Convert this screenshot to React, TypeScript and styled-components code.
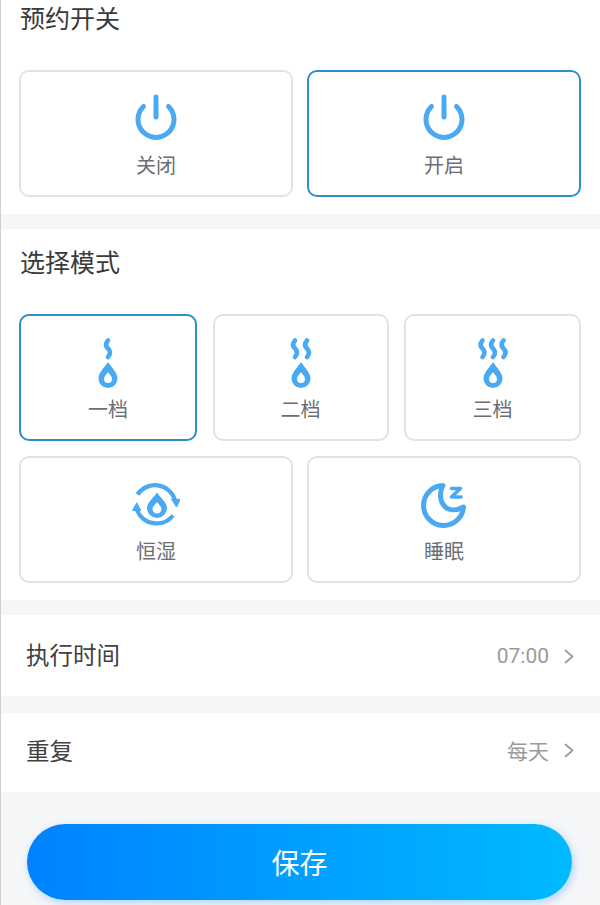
import React from "react";
import styled, { createGlobalStyle } from "styled-components";

const Global = createGlobalStyle`
  html, body { margin: 0; padding: 0; background: #f5f6f8; }
  body { width: 600px; height: 905px; overflow: hidden; font-family: "Noto Sans CJK SC", "Noto Sans", sans-serif; }
  * { box-sizing: border-box; }
`;

const Page = styled.div`
  width: 600px;
  height: 905px;
  overflow: hidden;
  background: #f5f6f8;
  border-left: 1px solid #cfcfcf;
  display: flex;
  flex-direction: column;
`;

const Section = styled.section<{ $first?: boolean }>`
  background: #fff;
  padding: ${(p) => (p.$first ? "0" : "14px")} 19px 17px 18px;
  margin-bottom: 15px;
`;

const Title = styled.h2<{ $first?: boolean }>`
  margin: 0 0 ${(p) => (p.$first ? "32px" : "31px")};
  height: ${(p) => (p.$first ? "38px" : "40px")};
  line-height: ${(p) => (p.$first ? "34px" : "36px")};
  font-size: 25px;
  font-weight: 400;
  color: #3a3a3a;
  padding-left: 1px;
`;

const Grid = styled.div<{ $cols: string }>`
  display: grid;
  grid-template-columns: ${(p) => p.$cols};
  justify-content: space-between;
  & + & { margin-top: 15px; }
`;

const Card = styled.div<{ $active?: boolean }>`
  height: 127px;
  border: 2px solid ${(p) => (p.$active ? "#2b8fc9" : "#e2e2e2")};
  border-radius: 10px;
  background: #fff;
  padding-top: 18px;
  display: flex;
  flex-direction: column;
  align-items: center;
`;

const IconSlot = styled.div`
  height: 58px;
  display: flex;
  align-items: center;
  justify-content: center;
`;

const CardLabel = styled.span`
  margin-top: 5px;
  height: 24px;
  line-height: 24px;
  font-size: 20px;
  color: #6b6e73;
`;

const Row = styled.div<{ $height: number; $gap: number; $lift: number }>`
  height: ${(p) => p.$height}px;
  margin-bottom: ${(p) => p.$gap}px;
  background: #fff;
  padding: 0 26px ${(p) => p.$lift}px 25px;
  display: flex;
  align-items: center;
  justify-content: space-between;
`;

const RowLabel = styled.span`
  font-size: 23.5px;
  color: #424242;
`;

const RowValue = styled.span<{ $drop?: boolean }>`
  display: flex;
  align-items: center;
  gap: 15px;
  margin-top: ${(p) => (p.$drop ? "4px" : "0")};
  font-size: 21px;
  color: #9b9b9b;
  font-family: Roboto, "Noto Sans CJK SC", sans-serif;
`;

const Footer = styled.div`
  padding: 32px 28px 0 26px;
`;

const SaveButton = styled.button`
  display: block;
  width: 100%;
  height: 76px;
  border: 0;
  border-radius: 38px;
  background: linear-gradient(90deg, #0082ff 0%, #00baff 100%);
  box-shadow: 2px 3px 8px rgba(0, 130, 255, 0.28);
  color: #fff;
  font-family: "Noto Sans CJK SC", sans-serif;
  font-size: 28px;
  padding: 0;
`;

const BLUE = "#4aa9f3";

const PowerIcon = () => (
  <svg width="44" height="52" viewBox="0 0 44 52" fill="none" stroke={BLUE} strokeWidth="5" strokeLinecap="round">
    <path d="M22 4V24" />
    <path d="M9.5 13.5A18 18 0 1 0 34.5 13.5" />
  </svg>
);

const Wave = ({ x }: { x: number }) => (
  <path
    d={`M${x} 5.5C${x - 2.6} 8.5 ${x - 2.6} 11 ${x} 13.5C${x + 2.6} 16 ${x + 2.6} 19 ${x} 22`}
    fill="none"
    stroke={BLUE}
    strokeWidth="4.6"
    strokeLinecap="round"
  />
);

const SteamIcon = ({ xs }: { xs: number[] }) => (
  <svg width="40" height="56" viewBox="0 0 40 56">
    {xs.map((x) => (
      <Wave key={x} x={x} />
    ))}
    <path
      fillRule="evenodd"
      fill={BLUE}
      d="M20 27C22 31 29.5 37 29.5 43.5A9.5 9.5 0 0 1 10.5 43.5C10.5 37 18 31 20 27ZM20 37C21 39 24 41 24 44A4 4 0 0 1 16 44C16 41 19 39 20 37Z"
    />
  </svg>
);

const HumidIcon = () => (
  <svg width="48" height="46" viewBox="0 0 48 46" fill="none">
    <path d="M5.5 12.5A21 21 0 0 1 43 18" stroke={BLUE} strokeWidth="4.2" />
    <path d="M41 33.5A21 21 0 0 1 5 28" stroke={BLUE} strokeWidth="4.2" />
    <path d="M39.5 17L48 17.5L44.5 25Z" fill={BLUE} stroke={BLUE} strokeWidth="1" strokeLinejoin="round" />
    <path d="M0.5 28.5L8.8 28.5L4.8 20.8Z" fill={BLUE} stroke={BLUE} strokeWidth="1" strokeLinejoin="round" />
    <path
      fillRule="evenodd"
      fill={BLUE}
      d="M25 10.5C27 14.5 35 20 35 26A10 10 0 0 1 15 26C15 20 23 14.5 25 10.5ZM25 20C26 22 29.5 24 29.5 27A4.5 4.5 0 0 1 20.5 27C20.5 24 24 22 25 20Z"
    />
  </svg>
);

const SleepIcon = () => (
  <svg width="46" height="46" viewBox="0 0 46 46" fill="none" stroke={BLUE}>
    <path
      d="M22 3.5A20 20 0 1 0 42.5 25C35 29 27 29 22.5 23C18.5 17.5 18.5 9 22 3.5Z"
      strokeWidth="5"
      strokeLinejoin="round"
    />
    <path d="M30.5 6.5H39.5L30.5 15H40" strokeWidth="3.6" strokeLinecap="round" strokeLinejoin="round" />
  </svg>
);

const Chevron = () => (
  <svg width="10" height="15" viewBox="0 0 10 15" fill="none" stroke="#9b9b9b" strokeWidth="1.8" strokeLinecap="round" strokeLinejoin="round">
    <path d="M1.5 1.5L8.5 7.5L1.5 13.5" />
  </svg>
);

export default function App() {
  return (
    <>
      <Global />
      <Page>
        <Section $first>
          <Title $first>预约开关</Title>
          <Grid $cols="274px 274px">
            <Card>
              <IconSlot><PowerIcon /></IconSlot>
              <CardLabel>关闭</CardLabel>
            </Card>
            <Card $active>
              <IconSlot><PowerIcon /></IconSlot>
              <CardLabel>开启</CardLabel>
            </Card>
          </Grid>
        </Section>
        <Section>
          <Title>选择模式</Title>
          <Grid $cols="178px 176px 177px">
            <Card $active>
              <IconSlot><SteamIcon xs={[20]} /></IconSlot>
              <CardLabel>一档</CardLabel>
            </Card>
            <Card>
              <IconSlot><SteamIcon xs={[14, 26]} /></IconSlot>
              <CardLabel>二档</CardLabel>
            </Card>
            <Card>
              <IconSlot><SteamIcon xs={[9.5, 20, 30.5]} /></IconSlot>
              <CardLabel>三档</CardLabel>
            </Card>
          </Grid>
          <Grid $cols="274px 274px">
            <Card>
              <IconSlot><HumidIcon /></IconSlot>
              <CardLabel>恒湿</CardLabel>
            </Card>
            <Card>
              <IconSlot><SleepIcon /></IconSlot>
              <CardLabel>睡眠</CardLabel>
            </Card>
          </Grid>
        </Section>
        <Row $height={81} $gap={17} $lift={3}>
          <RowLabel>执行时间</RowLabel>
          <RowValue $drop>07:00<Chevron /></RowValue>
        </Row>
        <Row $height={79} $gap={0} $lift={5}>
          <RowLabel>重复</RowLabel>
          <RowValue>每天<Chevron /></RowValue>
        </Row>
        <Footer>
          <SaveButton>保存</SaveButton>
        </Footer>
      </Page>
    </>
  );
}
